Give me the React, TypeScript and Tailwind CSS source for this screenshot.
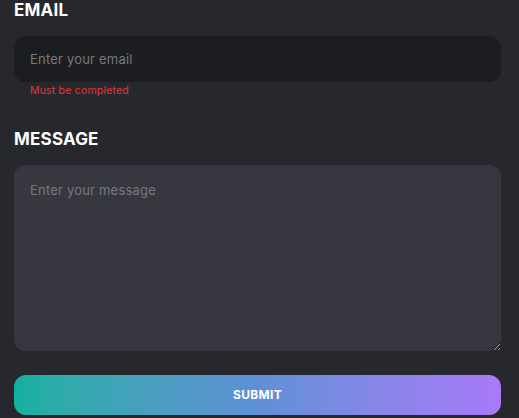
export default function App() {
  return (
    <div className="min-h-screen w-full bg-[#27282d] pl-[14px] pr-[18px] pt-0 font-['Inter',sans-serif]">
      <form className="flex flex-col" onSubmit={(e) => e.preventDefault()}>
        <label className="text-[17px] leading-[20px] font-bold text-white tracking-[0.2px]">EMAIL</label>
        <input
          type="email"
          autoFocus
          placeholder="Enter your email"
          className="mt-[16px] h-[46px] w-full rounded-[12px] bg-[#1c1d21] px-4 text-[13px] tracking-[0.2px] text-white placeholder:text-[#77787e] outline-none caret-white"
        />
        <p className="mt-[2px] pl-4 text-[10.5px] leading-[14px] tracking-[0.2px] text-[#e0393d]">Must be completed</p>

        <label className="mt-[31px] text-[17px] leading-[20px] font-bold text-white tracking-[0.2px]">MESSAGE</label>
        <textarea
          placeholder="Enter your message"
          className="mt-[16px] h-[186px] w-full rounded-[12px] bg-[#37373f] px-4 pt-[16px] text-[13px] tracking-[0.2px] text-white placeholder:text-[#77787e] outline-none"
        />

        <button
          type="submit"
          className="mt-[24px] h-[40px] w-full rounded-[12px] bg-gradient-to-r from-[#12b0a0] via-[#5e90d6] to-[#a879f9] text-[12px] font-bold tracking-[0.3px] text-white"
        >
          SUBMIT
        </button>
      </form>
    </div>
  );
}
